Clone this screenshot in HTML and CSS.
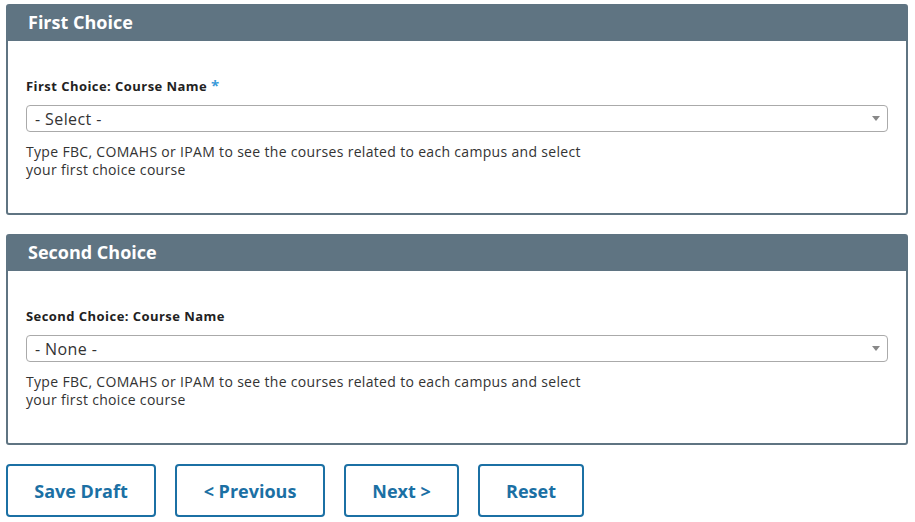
FILE: index.html
```html
<!DOCTYPE html>
<html>
<head>
<meta charset="utf-8">
<link rel="stylesheet" href="styles.css">
</head>
<body>
<div class="page">
  <section class="panel">
    <div class="panel-head">First Choice</div>
    <div class="panel-body">
      <div class="label">First Choice: Course Name <span class="req">*</span></div>
      <div class="select"><span>- Select -</span><span class="arrow"></span></div>
      <div class="help">Type FBC, COMAHS or IPAM to see the courses related to each campus and select<br>your first choice course</div>
    </div>
  </section>
  <section class="panel">
    <div class="panel-head">Second Choice</div>
    <div class="panel-body">
      <div class="label">Second Choice: Course Name</div>
      <div class="select"><span>- None -</span><span class="arrow"></span></div>
      <div class="help">Type FBC, COMAHS or IPAM to see the courses related to each campus and select<br>your first choice course</div>
    </div>
  </section>
  <div class="actions">
    <button class="btn btn-wide">Save Draft</button>
    <button class="btn btn-wide">&lt; Previous</button>
    <button class="btn btn-next">Next &gt;</button>
    <button class="btn btn-reset">Reset</button>
  </div>
</div>
</body>
</html>
```
FILE: styles.css
```css
html, body {
  margin: 0;
  padding: 0;
  background: #ffffff;
}
body {
  font-family: "Open Sans", "DejaVu Sans", sans-serif;
  color: #333333;
}
.page {
  padding: 4px 7px 0 6px;
  display: flex;
  flex-direction: column;
  gap: 19px;
}
.panel {
  border: 2px solid #5f7482;
  border-radius: 3px;
}
.panel-head {
  background: #5f7482;
  color: #ffffff;
  font-weight: 700;
  font-size: 18px;
  line-height: 33px;
  height: 35px;
  padding: 0 20px;
}
.panel-body {
  padding: 37px 18px 34px;
}
.label {
  font-size: 13px;
  font-weight: 700;
  line-height: 16px;
  letter-spacing: 0.45px;
  color: #222222;
  margin-bottom: 11px;
}
.req {
  color: #3a9ad9;
  font-size: 15px;
  line-height: 0;
}
.select {
  height: 25px;
  border: 1px solid #aaaaaa;
  border-radius: 4px;
  display: flex;
  align-items: center;
  justify-content: space-between;
  padding: 0 7px 0 8px;
  font-size: 16px;
  letter-spacing: 0.4px;
  color: #333333;
}
.arrow {
  width: 0;
  height: 0;
  border-left: 4px solid transparent;
  border-right: 4px solid transparent;
  border-top: 5px solid #888888;
}
.help {
  margin-top: 11px;
  font-size: 14px;
  line-height: 18px;
  letter-spacing: 0.32px;
  color: #333333;
}
.actions {
  display: flex;
  gap: 19px;
}
.btn {
  height: 53px;
  background: #ffffff;
  border: 2px solid #1b70a4;
  border-radius: 4px;
  color: #1b70a4;
  font-family: "Open Sans", "DejaVu Sans", sans-serif;
  font-weight: 700;
  font-size: 18px;
  padding: 0;
}
.btn-wide {
  width: 150px;
}
.btn-next {
  width: 115px;
}
.btn-reset {
  width: 106px;
}
```
